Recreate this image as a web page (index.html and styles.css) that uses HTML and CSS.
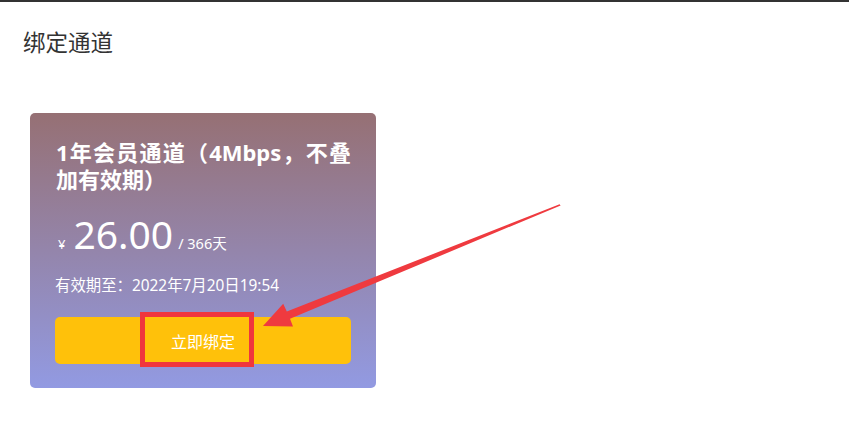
FILE: index.html
```html
<!DOCTYPE html>
<html lang="zh-CN">
<head>
<meta charset="utf-8">
<title>绑定通道</title>
<link rel="stylesheet" href="styles.css">
</head>
<body>
<div class="page">
  <h2 class="page-title">绑定通道</h2>
  <div class="cards">
    <div class="card">
      <div class="card-title">1年会员通道（4Mbps，不叠加有效期）</div>
      <div class="price-row">
        <span class="currency">¥</span>
        <span class="amount">26.00</span>
        <span class="period">/ 366天</span>
      </div>
      <div class="expire">有效期至：2022年7月20日19:54</div>
      <div class="btn">
        <span class="btn-text">立即绑定</span>
        <span class="mark-box"></span>
      </div>
    </div>
  </div>
  <svg class="arrow" width="849" height="423" viewBox="0 0 849 423">
    <polygon points="263,326 293,326.5 290,318.8 560.6,205.4 559.6,204.2 286.8,311.6 283.2,303.8" fill="#ef3a3f"/>
  </svg>
</div>
</body>
</html>
```

FILE: styles.css
```css
html, body {
  margin: 0;
  padding: 0;
  background: #ffffff;
}

body {
  font-family: "Noto Sans", "Noto Sans CJK SC", sans-serif;
  width: 849px;
  height: 423px;
  overflow: hidden;
}

.page {
  position: relative;
  border-top: 2px solid #333333;
  padding-top: 24px;
  box-sizing: border-box;
  height: 423px;
}

.page-title {
  margin: 0 0 0 23px;
  font-family: "Noto Sans CJK SC", sans-serif;
  font-size: 22.5px;
  line-height: 30px;
  font-weight: 400;
  color: #333333;
}

.cards {
  display: flex;
  margin-top: 57px;
  padding-left: 30px;
}

.card {
  width: 346px;
  box-sizing: border-box;
  padding: 26px 25px 24px 25px;
  border-radius: 5px;
  background: linear-gradient(180deg, #967074 0%, #929ae2 100%);
  color: #ffffff;
  display: flex;
  flex-direction: column;
}

.card-title {
  font-family: "Noto Sans", "Noto Sans CJK SC", sans-serif;
  font-size: 22px;
  font-weight: 700;
  line-height: 27px;
  text-align: justify;
  padding-left: 1px;
}

.price-row {
  display: flex;
  align-items: baseline;
  margin-top: 18px;
  height: 46px;
  line-height: 46px;
  padding-left: 3px;
}

.currency {
  font-size: 13px;
  margin-right: 8px;
}

.amount {
  font-family: "Noto Sans", sans-serif;
  font-size: 39px;
  font-weight: 400;
  letter-spacing: 0;
}

.period {
  font-family: "Noto Sans", "Noto Sans CJK SC", sans-serif;
  font-size: 14.5px;
  margin-left: 5px;
}

.expire {
  margin-top: 19px;
  font-family: "Noto Sans", "Noto Sans CJK SC", sans-serif;
  font-size: 15.4px;
  line-height: 20px;
}

.btn {
  position: relative;
  margin-top: 21px;
  height: 47px;
  border-radius: 5px;
  background: #ffc10a;
  display: flex;
  align-items: center;
  justify-content: center;
}

.btn-text {
  font-family: "Noto Sans CJK SC", sans-serif;
  font-size: 16px;
  color: #ffffff;
}

.mark-box {
  position: absolute;
  left: 85px;
  top: -5px;
  width: 114px;
  height: 55px;
  box-sizing: border-box;
  border: 5px solid #f0363d;
}

.arrow {
  position: absolute;
  left: 0;
  top: -2px;
  pointer-events: none;
}
```
